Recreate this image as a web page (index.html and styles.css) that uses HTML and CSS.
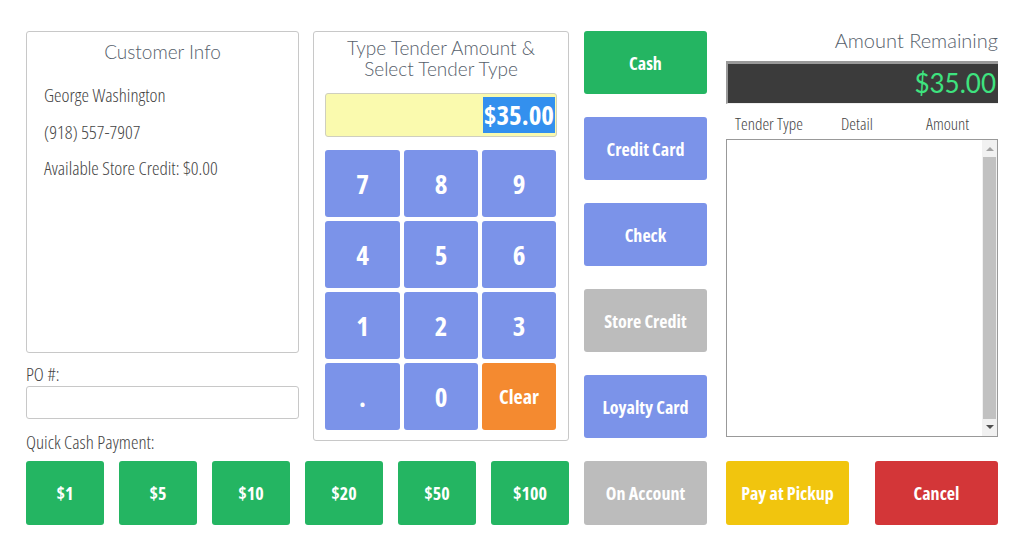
FILE: index.html
```html
<!DOCTYPE html>
<html>
<head>
<meta charset="utf-8">
<link rel="stylesheet" href="styles.css">
</head>
<body>
<div class="page">
  <div class="top">
    <div class="col-left">
      <div class="card customer">
        <div class="heading">Customer Info</div>
        <div class="line">George Washington</div>
        <div class="line">(918) 557-7907</div>
        <div class="line">Available Store Credit: $0.00</div>
      </div>
      <div class="label po-label">PO #:</div>
      <div class="po-input"></div>
      <div class="label qc-label">Quick Cash Payment:</div>
    </div>
    <div class="card tender">
      <div class="heading tender-head">Type Tender Amount &amp;<br>Select Tender Type</div>
      <div class="amount-input"><span class="sel">$35.00</span></div>
      <div class="keypad">
        <div class="key">7</div><div class="key">8</div><div class="key">9</div>
        <div class="key">4</div><div class="key">5</div><div class="key">6</div>
        <div class="key">1</div><div class="key">2</div><div class="key">3</div>
        <div class="key">.</div><div class="key">0</div><div class="key clear">Clear</div>
      </div>
    </div>
    <div class="col-types">
      <div class="btn green">Cash</div>
      <div class="btn blue">Credit Card</div>
      <div class="btn blue">Check</div>
      <div class="btn gray">Store Credit</div>
      <div class="btn blue">Loyalty Card</div>
    </div>
    <div class="col-right">
      <div class="heading remain-head">Amount Remaining</div>
      <div class="remain-box">$35.00</div>
      <div class="cols">
        <span class="c1">Tender Type</span><span class="c2">Detail</span><span class="c3">Amount</span>
      </div>
      <div class="list">
        <div class="list-body"></div>
        <div class="scrollbar">
          <div class="arrow up"></div>
          <div class="thumb"></div>
          <div class="arrow down"></div>
        </div>
      </div>
    </div>
  </div>
  <div class="bottom">
    <div class="qbtn green">$1</div>
    <div class="qbtn green">$5</div>
    <div class="qbtn green">$10</div>
    <div class="qbtn green">$20</div>
    <div class="qbtn green">$50</div>
    <div class="qbtn green">$100</div>
    <div class="wbtn gray">On Account</div>
    <div class="wbtn yellow pickup">Pay at Pickup</div>
    <div class="wbtn red cancel">Cancel</div>
  </div>
</div>
</body>
</html>
```
FILE: styles.css
```css
* { box-sizing: border-box; }
html, body { margin: 0; padding: 0; background: #fff; }
body {
  font-family: "Open Sans", "Liberation Sans", sans-serif;
  font-stretch: 75%;
  color: #555;
}
.page { padding: 31px 0 0 26px; width: 1026px; height: 559px; }
.top { display: flex; align-items: flex-start; height: 430px; }

.card { border: 1px solid #c8c8c8; border-radius: 3px; background: #fff; }
.heading {
  font-family: "Lato", "Noto Sans", sans-serif;
  font-stretch: 100%;
  font-weight: 300;
  color: #56606b;
  font-size: 19px;
  text-align: center;
}

.col-left { width: 273px; display: flex; flex-direction: column; }
.customer { height: 322px; padding: 8px 0 0 16px; }
.customer .heading { padding-right: 16px; line-height: 24px; margin-bottom: 20px; }
.customer .line { font-size: 19px; font-stretch: 81%; font-weight: 300; line-height: 22px; color: #444; margin-bottom: 14.5px; padding-left: 1px; }
.label { font-size: 19px; font-stretch: 81%; font-weight: 300; color: #444; line-height: 22px; }
.po-label { margin-top: 10px; }
.po-input { height: 33px; border: 1px solid #c8c8c8; border-radius: 3px; margin-top: 1px; }
.qc-label { margin-top: 12px; }

.tender { width: 256px; height: 410px; margin-left: 14px; padding: 5px 11px 0 11px; }
.tender-head { line-height: 21px; margin-bottom: 14px; }
.amount-input {
  height: 44px;
  background: #fafaae;
  border: 1px solid #cfcfbf;
  border-radius: 3px;
  display: flex;
  justify-content: flex-end;
  align-items: center;
  padding-right: 1px;
}
.sel {
  background: #3390ee;
  color: #fff;
  font-weight: 700;
  font-size: 27px;
  line-height: 36px;
  padding: 0 1px;
}
.keypad {
  margin-top: 13px;
  display: grid;
  grid-template-columns: 75px 74px 74px;
  grid-auto-rows: 67px;
  gap: 4px;
}
.key {
  background: #7b93e9;
  border-radius: 3px;
  color: #fff;
  font-weight: 700;
  font-size: 27px;
  display: flex;
  align-items: center;
  justify-content: center;
}
.key.clear { background: #f48a30; font-size: 20px; }

.col-types { margin-left: 15px; width: 123px; display: flex; flex-direction: column; gap: 23px; }
.btn, .qbtn, .wbtn {
  border-radius: 3px;
  color: #fff;
  font-weight: 700;
  font-size: 18px;
  display: flex;
  align-items: center;
  justify-content: center;
}
.btn { height: 63px; }
.green { background: #24b562; }
.blue { background: #7b93e9; }
.gray { background: #bcbcbc; }
.yellow { background: #f1c50e; }
.red { background: #d33638; }

.col-right { margin-left: 19px; width: 272px; display: flex; flex-direction: column; }
.remain-head { text-align: right; font-size: 20px; line-height: 20px; margin-top: -1px; margin-right: 0; }
.remain-box {
  margin-top: 11px;
  height: 43px;
  background: #3b3b3b;
  border-top: 3px solid #9a9a9a;
  border-left: 2px solid #9a9a9a;
  border-bottom: 1px solid #eee;
  color: #3ee37f;
  font-family: "Lato", "Noto Sans", sans-serif;
  font-stretch: 100%;
  font-weight: 400;
  font-size: 26px;
  text-align: right;
  line-height: 38px;
  padding-right: 2px;
}
.cols { display: flex; font-size: 17px; font-stretch: 80%; font-weight: 300; color: #444; height: 35px; align-items: center; padding-top: 4px; }
.cols .c1 { margin-left: 9px; width: 106px; }
.cols .c2 { width: 85px; }
.list { height: 298px; border: 1px solid #999; display: flex; }
.list-body { flex: 1; }
.scrollbar { width: 15px; background: #f1f1f1; display: flex; flex-direction: column; align-items: center; }
.arrow { width: 0; height: 0; border-left: 4px solid transparent; border-right: 4px solid transparent; }
.arrow.up { border-bottom: 4px solid #a3a3a3; margin: 7px 0 6px; }
.arrow.down { border-top: 4px solid #505050; margin: 6px 0 7px; }
.thumb { width: 13px; flex: 1; background: #c1c1c1; }

.bottom { display: flex; margin-top: 0; gap: 15px; }
.qbtn { width: 78px; height: 64px; }
.wbtn { width: 123px; height: 64px; }
.pickup { margin-left: 4px; }
.cancel { margin-left: 11px; }
```
